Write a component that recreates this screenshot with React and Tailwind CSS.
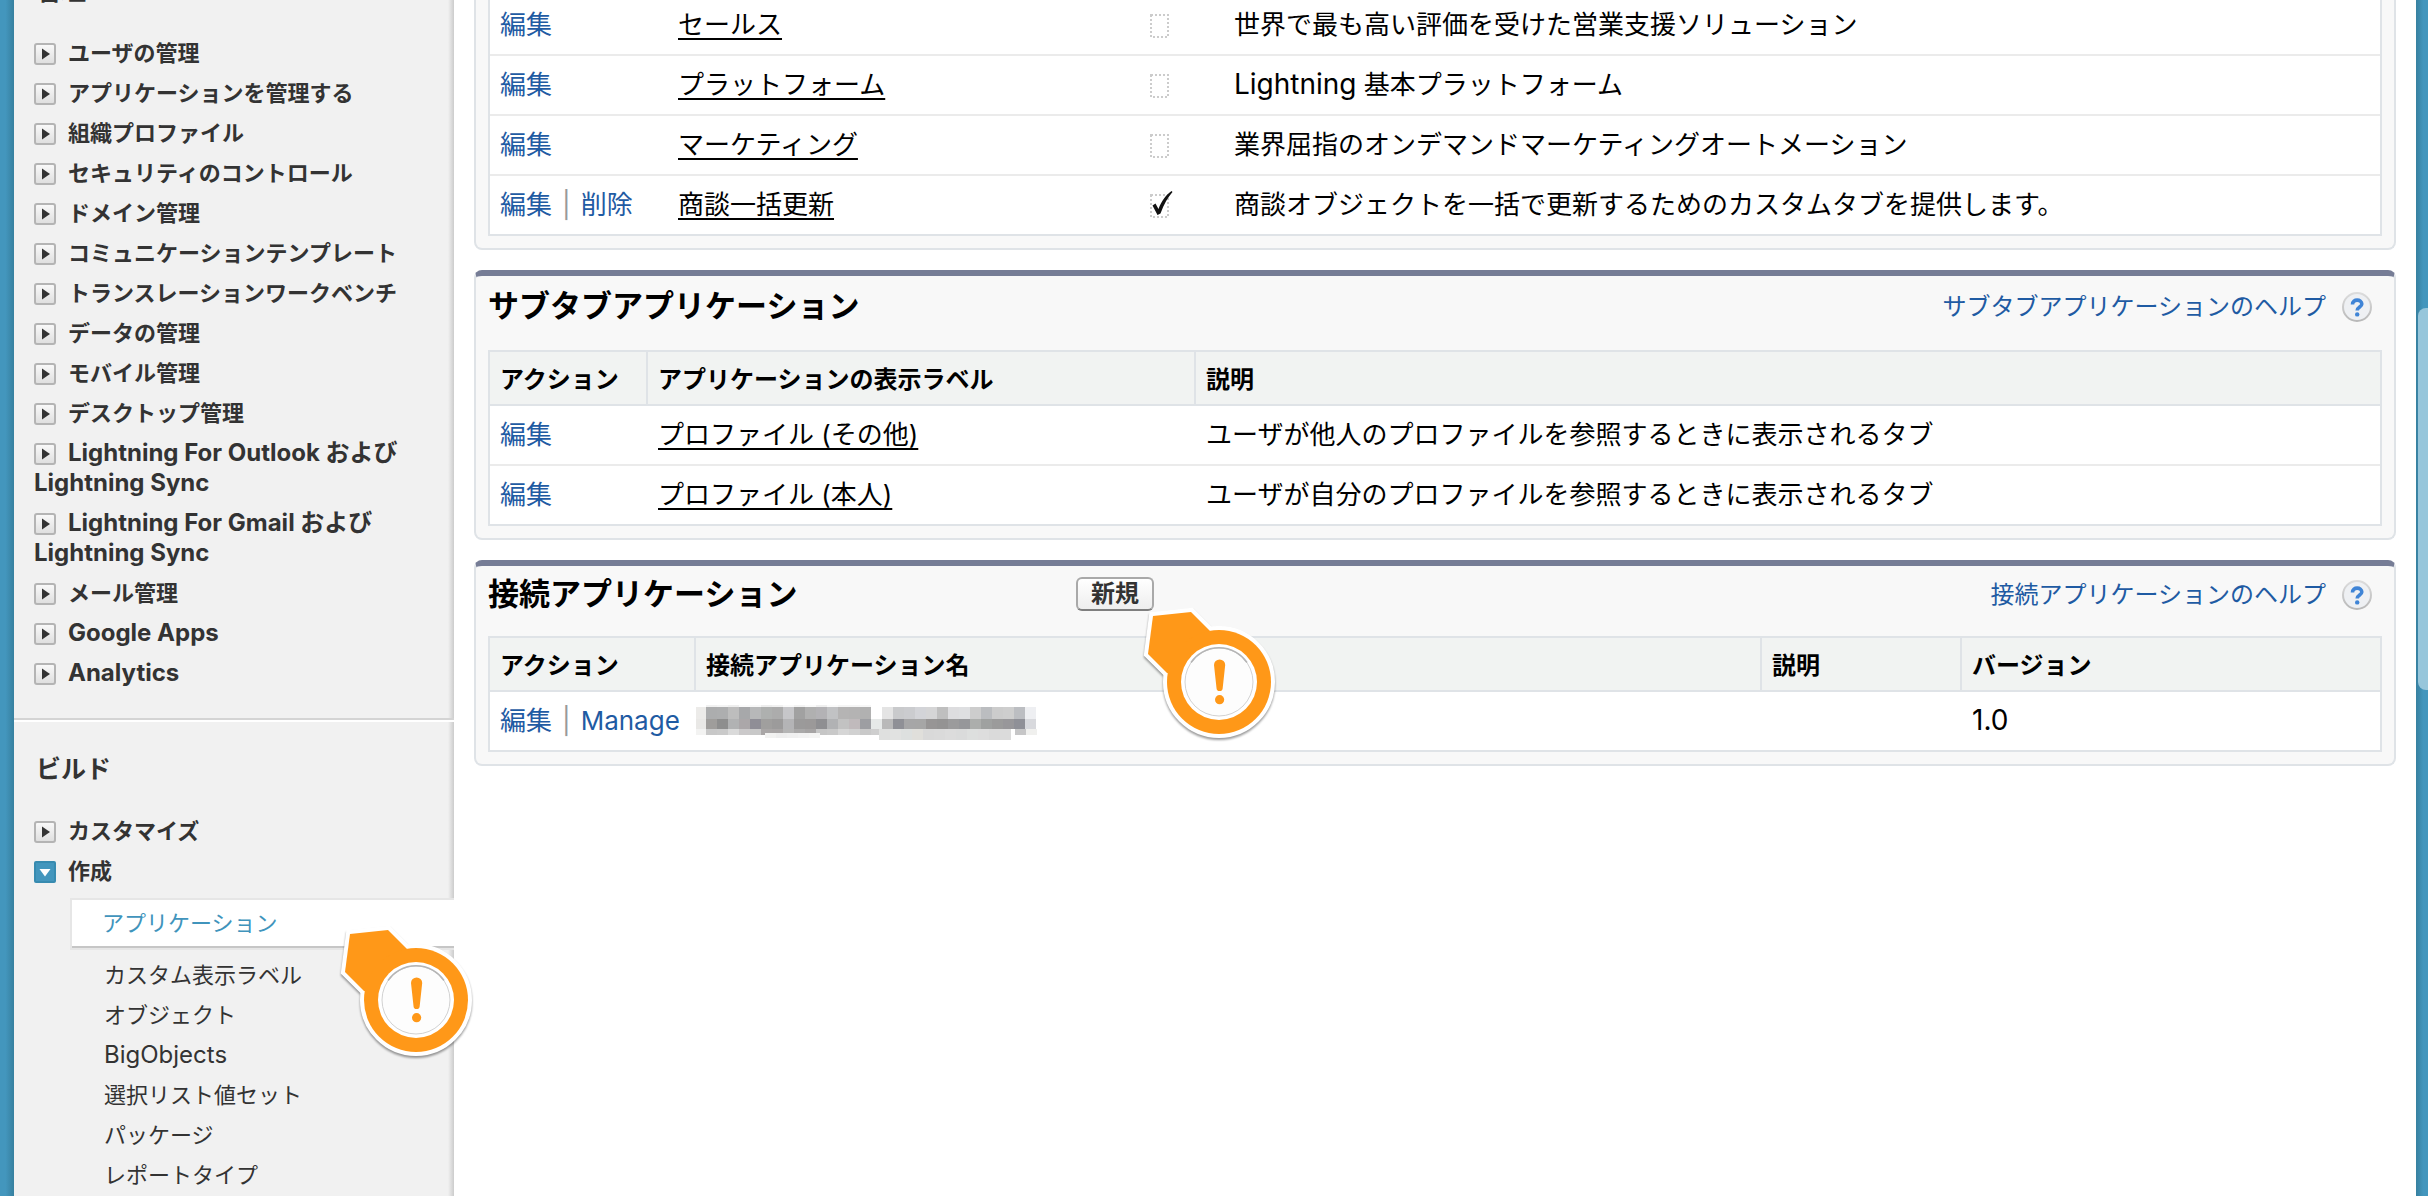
const adminItems = [
  "ユーザの管理",
  "アプリケーションを管理する",
  "組織プロファイル",
  "セキュリティのコントロール",
  "ドメイン管理",
  "コミュニケーションテンプレート",
  "トランスレーションワークベンチ",
  "データの管理",
  "モバイル管理",
  "デスクトップ管理",
  "Lightning For Outlook および Lightning Sync",
  "Lightning For Gmail および Lightning Sync",
  "メール管理",
  "Google Apps",
  "Analytics",
];

const createItems = [
  "カスタム表示ラベル",
  "オブジェクト",
  "BigObjects",
  "選択リスト値セット",
  "パッケージ",
  "レポートタイプ",
];

const apps = [
  { name: "セールス", desc: "世界で最も高い評価を受けた営業支援ソリューション" },
  {
    name: "プラットフォーム",
    desc: (
      <>
        <Latin>Lightning</Latin> 基本プラットフォーム
      </>
    ),
  },
  { name: "マーケティング", desc: "業界屈指のオンデマンドマーケティングオートメーション" },
  {
    name: "商談一括更新",
    desc: "商談オブジェクトを一括で更新するためのカスタムタブを提供します。",
    custom: true,
  },
];

const subtabApps = [
  { name: "プロファイル (その他)", desc: "ユーザが他人のプロファイルを参照するときに表示されるタブ" },
  { name: "プロファイル (本人)", desc: "ユーザが自分のプロファイルを参照するときに表示されるタブ" },
];

// each row: x, y, height, cell colours
const mosaic = [
  [0, 2, 12, ["#ecebe9"]],
  [0, 14, 10, ["#e9e8e6"]],
  [0, 24, 6, ["#f3f3f2"]],
  [10, 0, 2, ["#f1f1f1", "#f4f4f4", "#eeeeee", "#fafafa", "#f8f8f8", "#ededed", "#f1f1f1", "#fafafa", "#f3f3f3", "#fafafa", "#efefef", "#fafafa", "#f5f5f5", "#f5f5f5", "#f7f7f7"]],
  [10, 2, 12, ["#acadae", "#adaeaf", "#bdbdbd", "#a7a8aa", "#b7b8b9", "#aeb0af", "#acacac", "#c6c6c9", "#a1a1a1", "#b0b0b0", "#b3b2b5", "#c1c2c4", "#b5b4b4", "#b4b3b3", "#b1b1b1"]],
  [10, 14, 10, ["#9f9d9b", "#8e8e8e", "#b1b2b3", "#aba7a9", "#8f8e96", "#a09f9e", "#9c9b9b", "#b4b4b6", "#9b9a9a", "#9b9999", "#8f8f92", "#b1b2b4", "#c2c2c2", "#c0babc", "#9d9ea2"]],
  [10, 24, 6, ["#c8c8c8", "#cacaca", "#dadada", "#cbc9ca", "#c8c8c8", "#a9a6a6", "#a8a5a5", "#b5b5b5", "#aaa9a9", "#a6a4a4", "#c6c6c6", "#c9c9c9", "#d6d6d6", "#d1d1d1", "#c9c9c9"]],
  [69, 28, 5, ["#f2f2f1", "#eeeeee", "#f0f0f0", "#f2f2f2", "#f4f4f3"]],
  [175, 14, 10, ["#e6e9e8"]],
  [175, 24, 6, ["#cecece"]],
  [186, 2, 12, ["#e4e4e4", "#c9cacc", "#cbcccf", "#d3d4d8", "#d5d5d6", "#bfbfbf", "#dddddf", "#dedfe1", "#cdcdcd", "#bbbdc0", "#cccccc", "#cecece", "#bcbec2", "#eeeff2"]],
  [186, 14, 10, ["#b9b9b9", "#8f9096", "#a6a6a7", "#a6a6a6", "#979595", "#949393", "#9b9b9c", "#96979a", "#acaeac", "#9fa1a0", "#9b9b9b", "#98979a", "#8f9097", "#d8d9dd"]],
  [183, 24, 11, ["#dfe0df", "#e1e2e1", "#dde0df", "#e0dfdb", "#d9d9d9", "#dadada", "#dcdcdc", "#dadbdb", "#dddfde", "#dddddd", "#dadada", "#dbdbdb"]],
  [319, 24, 6, ["#c6c6c7", "#f0f0ee"]],
];

function Latin({ children }) {
  return <span className="text-[28px] leading-none">{children}</span>;
}

function Mosaic() {
  return (
    <svg width="350" height="36" viewBox="0 0 350 36" shapeRendering="crispEdges" aria-hidden="true">
      {mosaic.map(([x, y, h, cells]) =>
        cells.map((fill, i) => (
          <rect key={`${x}-${y}-${i}`} x={x + i * 11} y={y} width={x === 0 ? 10 : 11} height={h} fill={fill} />
        ))
      )}
    </svg>
  );
}

function ExpandIcon({ open }) {
  if (open) {
    return (
      <svg width="22" height="22" viewBox="0 0 22 22" className="mr-3 inline-block align-[-4px]" aria-hidden="true">
        <rect width="22" height="22" rx="2" fill="#378bb0" />
        <rect x="2" y="2" width="18" height="18" fill="#4396bd" />
        <path d="M5.500 8h11l-5.500 7.500z" fill="#fff" />
      </svg>
    );
  }
  return (
    <svg width="22" height="22" viewBox="0 0 22 22" className="mr-3 inline-block align-[-4px]" aria-hidden="true">
      <defs>
        <linearGradient id="expandFill" x1="0" y1="0" x2="0" y2="1">
          <stop offset="0" stopColor="#fafafa" />
          <stop offset="1" stopColor="#dedede" />
        </linearGradient>
      </defs>
      <rect x="1" y="1" width="20" height="20" rx="2" fill="url(#expandFill)" stroke="#b4b4b4" strokeWidth="2" />
      <path d="M8 5.500l8 5.500-8 5.500z" fill="#333" />
    </svg>
  );
}

function HelpIcon() {
  return (
    <svg width="30" height="30" viewBox="0 0 30 30" aria-hidden="true">
      <defs>
        <linearGradient id="helpRing" x1="0" y1="0" x2="0" y2="1">
          <stop offset="0" stopColor="#dcdcdc" />
          <stop offset="1" stopColor="#b9b9b9" />
        </linearGradient>
      </defs>
      <circle cx="15" cy="15" r="14" fill="#eef0f3" stroke="url(#helpRing)" strokeWidth="2" />
      <path d="M10.500 12.500c0-6 9.300-5.500 9.300-.5 0 3-4.600 3-4.600 6.500" fill="none" stroke="#3f84d6" strokeWidth="3.600" />
      <circle cx="15.200" cy="22.400" r="2.200" fill="#3f84d6" />
    </svg>
  );
}

function Marker({ className }) {
  return (
    <svg
      width="160"
      height="160"
      viewBox="-90 -90 160 160"
      className={`pointer-events-none absolute z-10 max-w-none overflow-visible ${className}`}
      aria-hidden="true"
    >
      <g className="drop-shadow-[0_2px_1px_rgba(0,0,0,0.4)]" fill="#fff" stroke="#fff" strokeWidth="8">
        <path d="M-66 -66L-28 -70L-9 -51L-52 -9L-71 -28z" />
        <circle r="52" />
      </g>
      <path d="M-66 -66L-28 -70L-9 -51L0 0L-52 -9L-71 -28z" fill="#ff9818" />
      <circle r="52" fill="#ff9818" />
      <circle r="38" fill="#fff" />
      <circle r="34" fill="#fdfdfd" stroke="#d2d2d2" strokeWidth="1" />
      <path d="M-28 -19.500A34 34 0 0 1 28 -19.500" fill="none" stroke="#b5b5b5" strokeWidth="1.500" />
      <path d="M-5 -17a5.600 5.600 0 0 1 11.200 0L3.700 6a3.100 3.100 0 0 1-6.200 0z" fill="#ff9818" />
      <circle cx="0.600" cy="17.700" r="4.600" fill="#ff9818" />
    </svg>
  );
}

function ActiveBox({ checked }) {
  return (
    <svg
      width="24"
      height="30"
      viewBox="0 0 24 30"
      role="img"
      aria-label={checked ? "チェックあり" : "チェックなし"}
    >
      <rect x="1" y="5" width="17" height="22" fill="none" stroke="#cccccc" strokeWidth="2" strokeDasharray="2 2" />
      {checked && <path d="M2.500 15.500l3-2 3 5.500c3-8 7-13.500 13-18l1 1c-4.500 5-8.500 12-12 21.500l-3 1.500z" fill="#111" />}
    </svg>
  );
}

function NavItem({ label, open }) {
  return (
    <li className="mb-[10px]">
      <a href="#">
        <ExpandIcon open={open} />
        <span className={/^[A-Z]/.test(label) ? "text-[24px]" : ""}>{label}</span>
      </a>
    </li>
  );
}

function Sidebar() {
  return (
    <aside className="relative -mt-14 w-[440px] shrink-0 bg-[#f1f1f1] text-[22px] leading-[30px] text-[#333]">
      <div className="absolute inset-y-0 right-0 w-[6px] bg-linear-to-r from-transparent to-[#cccccc]" />

      <nav className="relative border-b-2 border-[#d4d4d4] px-[20px] pt-8 pb-[20px]">
        <h2 className="mb-8 pl-[2px] text-[25px] font-bold">管理</h2>
        <ul className="font-bold">
          {adminItems.map((label) => (
            <NavItem key={label} label={label} />
          ))}
        </ul>
      </nav>

      <nav className="relative border-t-2 border-white pt-8 pl-[20px]">
        <h2 className="mb-8 pl-[2px] text-[25px] font-bold">ビルド</h2>
        <ul className="font-bold">
          <NavItem label="カスタマイズ" />
          <NavItem label="作成" open />
        </ul>
        <ul className="mt-[12px] pl-9">
          <li className="relative mb-[10px] border-t-2 border-b-2 border-l-2 border-[#e6e6e6] bg-white">
            <a href="#" className="block border-b-2 border-[#c6c6c6] py-2 pl-[30px] text-[#4094bc]">
              アプリケーション
            </a>
            <Marker className="right-[-32px] top-[10px]" />
          </li>
          {createItems.map((label) => (
            <li key={label} className="mb-[10px] pl-[34px]">
              <a href="#" className={/^[A-Z]/.test(label) ? "text-[24px]" : ""}>
                {label}
              </a>
            </li>
          ))}
        </ul>
      </nav>
    </aside>
  );
}

function Panel({ title, help, button, headClass, children }) {
  return (
    <section className="mb-5 rounded-lg border-2 border-t-[6px] border-[#dfe3e7] border-t-[#767d96] bg-[#f8f8f8] px-[12px] pb-[12px]">
      <div className={`flex items-center pr-[10px] ${headClass}`}>
        <h3 className="w-[31%] text-[31px] leading-[40px] font-bold">{title}</h3>
        {button}
        <a href="#" className="ml-auto flex items-center gap-4 pt-[2px] text-[24px] leading-[30px] text-[#1f5ba3]">
          {help}
          <HelpIcon />
        </a>
      </div>
      {children}
    </section>
  );
}

function Th({ children, last }) {
  return (
    <th
      className={`border-b-2 border-[#dfe3e7] bg-[#f1f3f2] px-[10px] pt-[10px] pb-[6px] text-left text-[24px] leading-9 font-bold ${
        last ? "" : "border-r-2"
      }`}
    >
      {children}
    </th>
  );
}

function Td({ children }) {
  return <td className="px-[10px] py-[11px] group-not-last:border-b-2 group-not-last:border-[#ebebeb]">{children}</td>;
}

function Actions({ second }) {
  return (
    <span className="whitespace-nowrap text-[#1f5ba3]">
      <a href="#">編集</a>
      {second && (
        <>
          <span className="px-[10px] text-[#999]">|</span>
          <a href="#">{second}</a>
        </>
      )}
    </span>
  );
}

function NameLink({ children }) {
  return (
    <a href="#" className="underline decoration-2 underline-offset-[4px]">
      {children}
    </a>
  );
}

const tableClass =
  "w-full table-fixed border-separate border-spacing-0 border-2 border-[#dfe3e7] bg-white text-[26px] leading-9";

function App() {
  return (
    <div
      lang="ja"
      className="flex h-screen overflow-hidden bg-white font-[Inter,'Noto_Sans_CJK_JP',sans-serif] text-black"
    >
      <div className="w-[14px] shrink-0 bg-linear-to-r from-[#4396bd] from-40% to-[#37809f]" />

      <Sidebar />

      <main className="-mt-1 min-w-0 flex-1 px-5">
        <section className="mb-5 rounded-b-lg border-2 border-t-0 border-[#dfe3e7] bg-[#f8f8f8] px-[12px] pb-[12px]">
          <table className="w-full table-fixed border-separate border-spacing-0 border-2 border-t-0 border-[#dfe3e7] bg-white text-[26px] leading-9">
            <colgroup>
              <col className="w-[178px]" />
              <col className="w-[472px]" />
              <col className="w-[84px]" />
              <col />
            </colgroup>
            <tbody>
              {apps.map((app) => (
                <tr key={app.name} className="group">
                  <Td>
                    <Actions second={app.custom && "削除"} />
                  </Td>
                  <Td>
                    <NameLink>{app.name}</NameLink>
                  </Td>
                  <Td>
                    <ActiveBox checked={app.custom} />
                  </Td>
                  <Td>{app.desc}</Td>
                </tr>
              ))}
            </tbody>
          </table>
        </section>

        <Panel title="サブタブアプリケーション" help="サブタブアプリケーションのヘルプ" headClass="pt-[10px] pb-6">
          <table className={tableClass}>
            <colgroup>
              <col className="w-[158px]" />
              <col className="w-[548px]" />
              <col />
            </colgroup>
            <thead>
              <tr>
                <Th>アクション</Th>
                <Th>アプリケーションの表示ラベル</Th>
                <Th last>説明</Th>
              </tr>
            </thead>
            <tbody>
              {subtabApps.map((app) => (
                <tr key={app.name} className="group">
                  <Td>
                    <Actions />
                  </Td>
                  <Td>
                    <NameLink>{app.name}</NameLink>
                  </Td>
                  <Td>{app.desc}</Td>
                </tr>
              ))}
            </tbody>
          </table>
        </Panel>

        <Panel
          title="接続アプリケーション"
          help="接続アプリケーションのヘルプ"
          headClass="pt-2 pb-[22px]"
          button={
            <div className="relative ml-1">
              <button className="block rounded-md border-2 border-[#a9a9a9] border-b-[#7f7f7f] bg-linear-to-b from-white to-[#eeeeee] px-[13px] text-[24px] leading-[30px] font-bold text-[#333]">
                新規
              </button>
              <Marker className="top-[15px] left-[53px]" />
            </div>
          }
        >
          <table className={tableClass}>
            <colgroup>
              <col className="w-[206px]" />
              <col />
              <col className="w-[200px]" />
              <col className="w-[418px]" />
            </colgroup>
            <thead>
              <tr>
                <Th>アクション</Th>
                <Th>接続アプリケーション名</Th>
                <Th>説明</Th>
                <Th last>バージョン</Th>
              </tr>
            </thead>
            <tbody>
              <tr className="group">
                <Td>
                  <Actions second="Manage" />
                </Td>
                <td className="pt-1">
                  <Mosaic />
                </td>
                <Td />
                <Td>
                  <Latin>1.0</Latin>
                </Td>
              </tr>
            </tbody>
          </table>
        </Panel>
      </main>

      <div className="w-3 shrink-0 bg-linear-to-r from-[#37809f] to-[#4396bd] to-60% pt-[308px] pl-[2px]">
        <div className="h-[382px] rounded-l-lg bg-[#97c6db]" />
      </div>
    </div>
  );
}

export default App;
